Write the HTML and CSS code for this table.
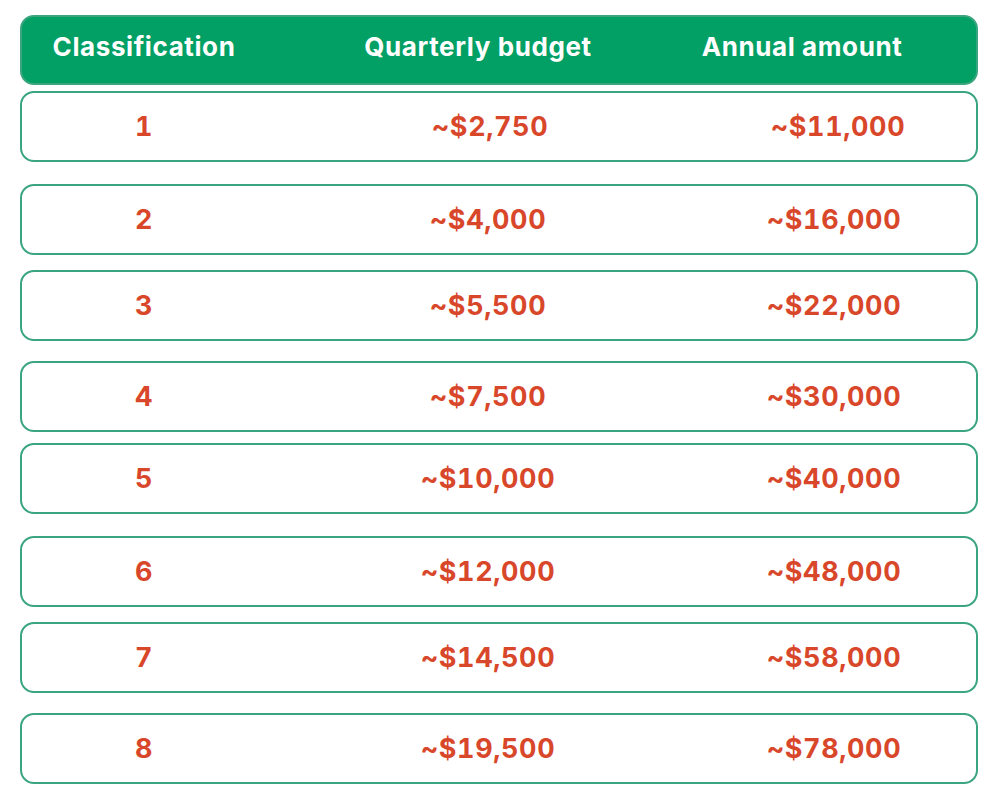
FILE: index.html
```html
<!DOCTYPE html>
<html>
<head>
<meta charset="utf-8">
<link rel="stylesheet" href="styles.css">
</head>
<body>
<div class="table">
  <div class="head">
    <div>Classification</div>
    <div>Quarterly budget</div>
    <div>Annual amount</div>
  </div>
  <div class="row"><div>1</div><div>~$2,750</div><div>~$11,000</div></div>
  <div class="row"><div>2</div><div>~$4,000</div><div>~$16,000</div></div>
  <div class="row"><div>3</div><div>~$5,500</div><div>~$22,000</div></div>
  <div class="row"><div>4</div><div>~$7,500</div><div>~$30,000</div></div>
  <div class="row"><div>5</div><div>~$10,000</div><div>~$40,000</div></div>
  <div class="row"><div>6</div><div>~$12,000</div><div>~$48,000</div></div>
  <div class="row"><div>7</div><div>~$14,500</div><div>~$58,000</div></div>
  <div class="row"><div>8</div><div>~$19,500</div><div>~$78,000</div></div>
</div>
</body>
</html>
```
FILE: styles.css
```css
html, body {
  margin: 0;
  padding: 0;
  background: #ffffff;
}
body {
  font-family: Inter, "Liberation Sans", sans-serif;
  font-weight: 700;
}
.table {
  width: 958px;
  margin-left: 20px;
  padding-top: 15px;
  display: flex;
  flex-direction: column;
}
.head {
  box-sizing: border-box;
  height: 70px;
  background: #02a064;
  border: 2px solid #3aa57f;
  border-radius: 14px;
  display: grid;
  grid-template-columns: 244px 424px 224px;
  align-items: center;
  color: #ffffff;
  font-size: 26px;
  letter-spacing: 0.6px;
  text-align: center;
  padding-bottom: 8px;
}
.row {
  box-sizing: border-box;
  height: 71px;
  border: 2.5px solid #3aa57f;
  border-radius: 14px;
  display: grid;
  grid-template-columns: 244px 444px 248px;
  align-items: center;
  color: #d9472b;
  font-size: 27px;
  letter-spacing: 0.6px;
  font-variant-numeric: tabular-nums;
  text-align: center;
}
.row:nth-child(2) {
  margin-top: 6px;
  grid-template-columns: 244px 448px 248px;
}
.row:nth-child(3) { margin-top: 22px; }
.row:nth-child(4) { margin-top: 15px; }
.row:nth-child(5) { margin-top: 20px; }
.row:nth-child(6) { margin-top: 11px; }
.row:nth-child(7) { margin-top: 22px; }
.row:nth-child(8) { margin-top: 15px; }
.row:nth-child(9) { margin-top: 20px; }
```
